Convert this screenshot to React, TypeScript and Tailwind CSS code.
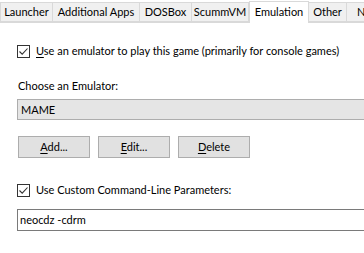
import React from "react";

const font = { fontFamily: 'Lato, "Liberation Sans", sans-serif' };

function Tab({ label, w, selected }: { label: string; w: number; selected?: boolean }) {
  return (
    <div
      className={
        selected
          ? "h-[22px] flex items-center justify-center bg-white border border-[#d9d9d9] border-b-0 -mb-px z-10 shrink-0 whitespace-nowrap"
          : "h-[20px] flex items-center justify-center bg-[#f0f0f0] border border-[#d9d9d9] border-l-0 first:border-l shrink-0 whitespace-nowrap"
      }
      style={{ width: w }}
    >
      <span className={selected ? "pb-[2px]" : ""}>{label}</span>
    </div>
  );
}

function Check() {
  return (
    <div className="w-[13px] h-[13px] border border-[#333] bg-white flex items-center justify-center shrink-0">
      <svg width="11" height="11" viewBox="0 0 11 11">
        <path d="M1.5 5.5 L4.2 8.2 L9.5 2.5" fill="none" stroke="#333" strokeWidth="1.1" />
      </svg>
    </div>
  );
}

function Btn({ k, rest }: { k: string; rest: string }) {
  return (
    <div className="w-[72px] h-[22px] border border-[#adadad] bg-[#e1e1e1] flex items-center justify-center">
      <span>
        <span className="underline underline-offset-2">{k}</span>
        {rest}
      </span>
    </div>
  );
}

export default function App() {
  return (
    <div className="w-[364px] h-[253px] bg-white text-[11px] leading-[14px] text-black overflow-hidden relative whitespace-nowrap" style={font}>
      <div className="flex items-end h-[22px] w-[420px] text-[11px]">
        <Tab label="Launcher" w={53} />
        <Tab label="Additional Apps" w={87} />
        <Tab label="DOSBox" w={52} />
        <Tab label="ScummVM" w={57} />
        <Tab label="Emulation" w={60} selected />
        <Tab label="Other" w={38} />
        <Tab label="Notes" w={50} />
      </div>
      <div className="border-t border-[#d9d9d9] pl-[17px] pt-[21px]">
        <div className="flex items-center gap-[6px] h-[14px]">
          <Check />
          <span>
            <span className="underline underline-offset-2">U</span>se an emulator to play this game (primarily for console games)
          </span>
        </div>
        <div className="mt-[21px] pl-px">Choose an Emulator:</div>
        <div className="mt-[6px] h-[21px] w-[400px] border border-[#adadad] bg-[#e5e5e5] flex items-center pl-[3px]">
          MAME
        </div>
        <div className="mt-[16px] flex gap-[8px] pl-px">
          <Btn k="A" rest="dd..." />
          <Btn k="E" rest="dit..." />
          <Btn k="D" rest="elete" />
        </div>
        <div className="mt-[25px] flex items-center gap-[6px] h-[14px]">
          <Check />
          <span>Use Custom Command-Line Parameters:</span>
        </div>
        <div className="mt-[12px] h-[22px] w-[400px] border border-[#7a7a7a] bg-white flex items-center pl-[2px]">
          neocdz -cdrm
        </div>
      </div>
    </div>
  );
}
